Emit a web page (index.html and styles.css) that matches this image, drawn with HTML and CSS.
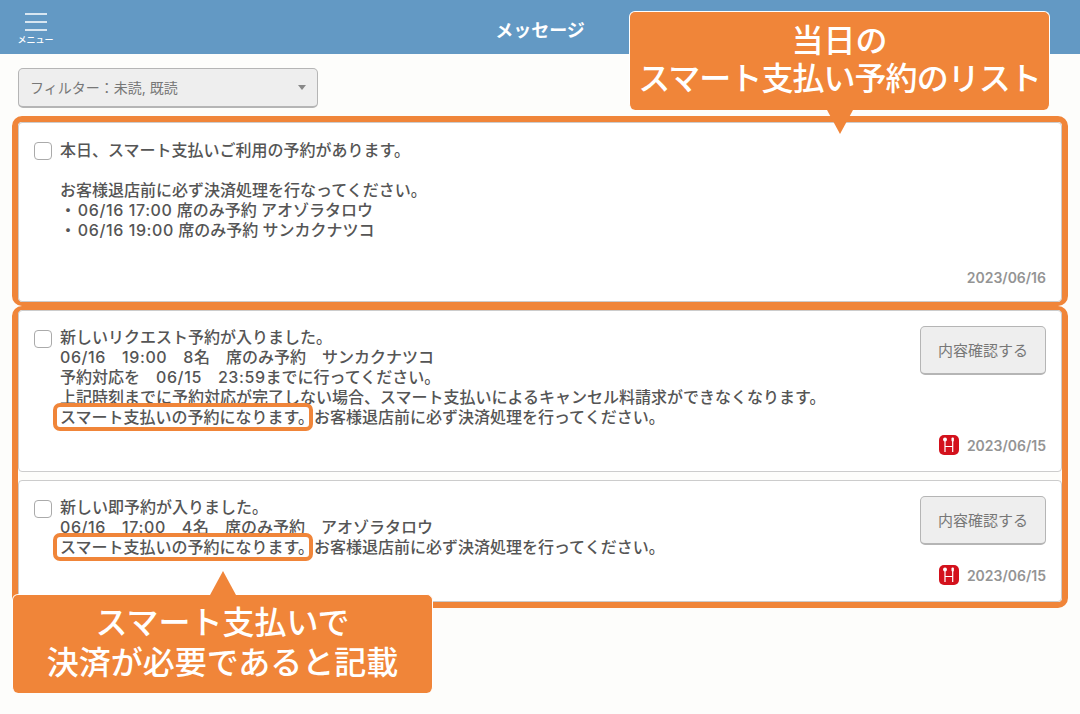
FILE: index.html
```html
<!DOCTYPE html>
<html lang="ja">
<head>
<meta charset="utf-8">
<title>メッセージ</title>
<link rel="stylesheet" href="styles.css">
</head>
<body>
<header class="topbar">
  <div class="menu">
    <svg class="menu-icon" width="22" height="20" viewBox="0 0 22 20"><path d="M0 1h22M0 9h22M0 17h22" stroke="#fff" stroke-width="1.6" fill="none"/></svg>
    <span class="menu-label">メニュー</span>
  </div>
  <h1 class="title">メッセージ</h1>
</header>
<main class="page">
  <div class="filter">
    <span>フィルター：未読, 既読</span>
    <span class="caret"></span>
  </div>
  <section class="group group-first">
    <article class="card card-today">
      <span class="check"></span>
      <div class="body">
        <p class="msg">本日、スマート支払いご利用の予約があります。<br><br>お客様退店前に必ず決済処理を行なってください。<br><span class="bullet">・ </span><span class="num">06/16 17:00</span> 席のみ予約 アオゾラタロウ<br><span class="bullet">・ </span><span class="num">06/16 19:00</span> 席のみ予約 サンカクナツコ</p>
      </div>
      <div class="meta"><span class="date">2023/06/16</span></div>
    </article>
  </section>
  <section class="group group-second">
    <article class="card card-request">
      <span class="check"></span>
      <div class="body">
        <p class="msg">新しいリクエスト予約が入りました。<br><span class="num">06/16</span>　<span class="num">19:00</span>　<span class="num">8</span>名　席のみ予約　サンカクナツコ<br>予約対応を　<span class="num">06/15</span>　<span class="num">23:59</span>までに行ってください。<br>上記時刻までに予約対応が完了しない場合、スマート支払いによるキャンセル料請求ができなくなります。<br><span class="mark">スマート支払いの予約になります。</span>お客様退店前に必ず決済処理を行ってください。</p>
      </div>
      <button class="confirm">内容確認する</button>
      <div class="meta">
        <svg class="brand" width="20" height="20" viewBox="0 0 20 20"><rect width="20" height="20" rx="5" fill="#d3111c"/><path d="M6 6v11M13.7 6v11M6 11.5h7.7" stroke="#fff" stroke-width="1.2" fill="none"/><circle cx="6" cy="4.6" r="2" fill="#fff"/><rect x="12.5" y="2.6" width="2.4" height="4" rx="1" fill="#fff"/></svg>
        <span class="date">2023/06/15</span>
      </div>
    </article>
    <article class="card card-instant">
      <span class="check"></span>
      <div class="body">
        <p class="msg">新しい即予約が入りました。<br><span class="num">06/16</span>　<span class="num">17:00</span>　<span class="num">4</span>名　席のみ予約　アオゾラタロウ<br><span class="mark">スマート支払いの予約になります。</span>お客様退店前に必ず決済処理を行ってください。</p>
      </div>
      <button class="confirm">内容確認する</button>
      <div class="meta">
        <svg class="brand" width="20" height="20" viewBox="0 0 20 20"><rect width="20" height="20" rx="5" fill="#d3111c"/><path d="M6 6v11M13.7 6v11M6 11.5h7.7" stroke="#fff" stroke-width="1.2" fill="none"/><circle cx="6" cy="4.6" r="2" fill="#fff"/><rect x="12.5" y="2.6" width="2.4" height="4" rx="1" fill="#fff"/></svg>
        <span class="date">2023/06/15</span>
      </div>
    </article>
  </section>
</main>
<aside class="callout callout-top">当日の<br><span class="tight">スマート支払い予約のリスト</span></aside>
<aside class="callout callout-bottom">スマート支払いで<br>決済が必要であると記載</aside>
</body>
</html>
```
FILE: styles.css
```css
* { box-sizing: border-box; }
html, body { margin: 0; height: 100%; }
body {
  position: relative;
  overflow: hidden;
  background: #fdfdfb;
  color: #555;
  font-family: "Noto Sans CJK JP", "Noto Sans", sans-serif;
}
.topbar {
  position: relative;
  height: 54px;
  background: #6399c4;
  display: flex;
  align-items: center;
  justify-content: center;
}
.menu {
  position: absolute;
  left: 18px;
  top: 13px;
  width: 35px;
  display: flex;
  flex-direction: column;
  align-items: center;
  color: #fff;
}
.menu-icon { display: block; flex: none; }
.menu-label {
  font-size: 9px;
  line-height: 13px;
  font-weight: 500;
  white-space: nowrap;
}
.title {
  margin: 0;
  color: #fff;
  font-size: 18px;
  line-height: 24px;
  font-weight: 700;
  position: relative;
  top: 2px;
}
.page { padding: 14px 12px 0; }
.filter {
  width: 300px;
  height: 40px;
  margin: 0 0 8px 6px;
  padding: 0 11px 1px 11px;
  display: flex;
  align-items: center;
  justify-content: space-between;
  background: #eee;
  border: 1px solid #b5b5b5;
  border-bottom-width: 2px;
  border-radius: 5px;
  font-family: Inter, "Noto Sans CJK JP", sans-serif;
  font-size: 14px;
  color: #777;
}
.caret {
  width: 0;
  height: 0;
  border-left: 4.5px solid transparent;
  border-right: 4.5px solid transparent;
  border-top: 5px solid #888;
}
.group {
  border: 6px solid #f08539;
  border-radius: 10px;
  background: #fff;
}
.group-first { height: 190px; border-bottom-width: 4px; }
.group-second {
  height: 302px;
  border-top-width: 4px;
  display: flex;
  flex-direction: column;
  gap: 8px;
  background: #fdfdfb;
}
.card {
  display: grid;
  grid-template-columns: 26px 1fr auto;
  grid-template-rows: 1fr auto;
  padding-left: 15px;
  padding-right: 15px;
  background: #fff;
  border: 1px solid #ccc;
  border-radius: 4px;
}
.card-today { height: 180px; padding-top: 17px; padding-bottom: 14px; }
.card-request { height: 162px; padding-top: 15px; padding-bottom: 16px; }
.card-instant { height: 122px; padding-top: 15px; padding-bottom: 16px; }
.check {
  width: 18px;
  height: 18px;
  margin-top: 4px;
  background: #fff;
  border: 1px solid #aaa;
  border-radius: 4px;
}
.card-today .check { margin-top: 2px; }
.body { min-width: 0; }
.msg {
  margin: 0;
  font-family: Inter, "Noto Sans CJK JP", sans-serif;
  font-size: 16px;
  line-height: 20.1px;
  font-weight: 500;
  color: #555;
  white-space: nowrap;
}
.card-request .msg, .card-instant .msg { padding-top: 1px; }
.num { letter-spacing: 0.6px; }
.bullet { letter-spacing: -1.25px; }
.mark {
  position: relative;
  display: inline-block;
}
.mark::after {
  content: "";
  position: absolute;
  inset: -4px 1px -4px -7px;
  border: 4px solid #f08539;
  border-radius: 7px;
}
.confirm {
  width: 126px;
  height: 49px;
  padding: 0 0 2px;
  background: #eee;
  border: 1px solid #b5b5b5;
  border-bottom-width: 2px;
  border-radius: 5px;
  color: #777;
  font: 400 15px "Noto Sans CJK JP", sans-serif;
}
.meta {
  grid-column: 1 / -1;
  display: flex;
  justify-content: flex-end;
  align-items: center;
  gap: 8px;
  height: 20px;
}
.date {
  font-family: Inter, "Noto Sans CJK JP", sans-serif;
  font-size: 14px;
  font-weight: 600;
  color: #949494;
}
.brand { display: block; }
.callout {
  position: absolute;
  background: #f08539;
  border: 1px solid #fff;
  border-bottom: 0;
  border-radius: 6px;
  color: #fff;
  font-size: 32px;
  font-weight: 500;
  text-align: center;
  white-space: nowrap;
}
.tight { letter-spacing: -0.95px; }
.callout::after {
  content: "";
  position: absolute;
  width: 0;
  height: 0;
  border-left: 13px solid transparent;
  border-right: 13px solid transparent;
}
.callout-top {
  left: 629px;
  top: 11px;
  width: 421px;
  height: 99px;
  padding-top: 7px;
  line-height: 38px;
}
.callout-top::after {
  left: 197px;
  top: 98px;
  border-top: 24px solid #f08539;
}
.callout-bottom {
  left: 12px;
  top: 594px;
  width: 421px;
  height: 99px;
  padding-top: 5px;
  line-height: 40px;
}
.callout-bottom::after {
  left: 197px;
  top: -24px;
  border-bottom: 24px solid #f08539;
}
```
